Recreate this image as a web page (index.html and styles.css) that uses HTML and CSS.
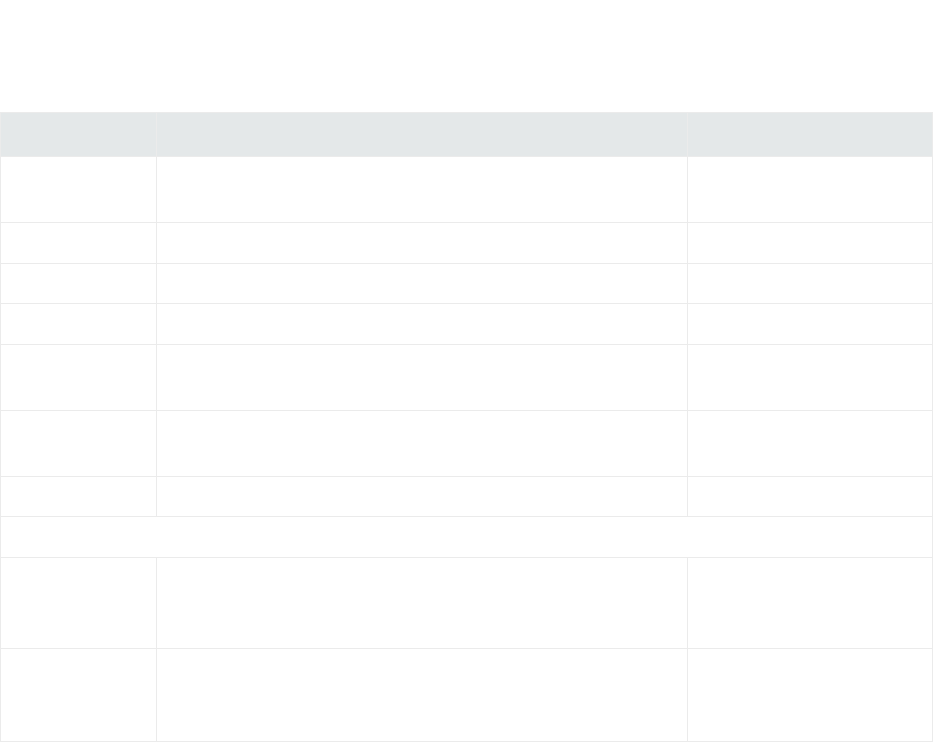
FILE: index.html
```html
<!DOCTYPE html>
<html lang="en">
<head>
<meta charset="utf-8">
<title>Table</title>
<link rel="stylesheet" href="styles.css">
</head>
<body>
<main class="page">
  <table class="grid">
    <colgroup>
      <col class="c-first">
      <col class="c-mid">
      <col class="c-last">
    </colgroup>
    <thead>
      <tr class="head"><th></th><th></th><th></th></tr>
    </thead>
    <tbody>
      <tr class="r2"><td></td><td></td><td></td></tr>
      <tr class="r1b"><td></td><td></td><td></td></tr>
      <tr class="r1a"><td></td><td></td><td></td></tr>
      <tr class="r1b"><td></td><td></td><td></td></tr>
      <tr class="r2"><td></td><td></td><td></td></tr>
      <tr class="r2"><td></td><td></td><td></td></tr>
      <tr class="r1a"><td></td><td></td><td></td></tr>
      <tr class="r1b"><td colspan="3"></td></tr>
      <tr class="r3"><td></td><td></td><td></td></tr>
      <tr class="r3b"><td></td><td></td><td></td></tr>
    </tbody>
  </table>
</main>
</body>
</html>
```

FILE: styles.css
```css
html, body {
  margin: 0;
  background: #ffffff;
  font-family: "Open Sans", "Liberation Sans", sans-serif;
  font-size: 15px;
}

.page {
  padding-top: 112px;
}

.grid {
  border-collapse: collapse;
  width: 932px;
  table-layout: fixed;
}

.c-first { width: 156px; }
.c-mid { width: 531px; }
.c-last { width: 245px; }

.grid th,
.grid td {
  border: 1px solid #ebebeb;
  padding: 0;
}

.grid thead th {
  background: #e4e8e9;
}

.head { height: 44px; }
.r1a { height: 40px; }
.r1b { height: 41px; }
.r2 { height: 66px; }
.r3 { height: 91px; }
.r3b { height: 93px; }
```
